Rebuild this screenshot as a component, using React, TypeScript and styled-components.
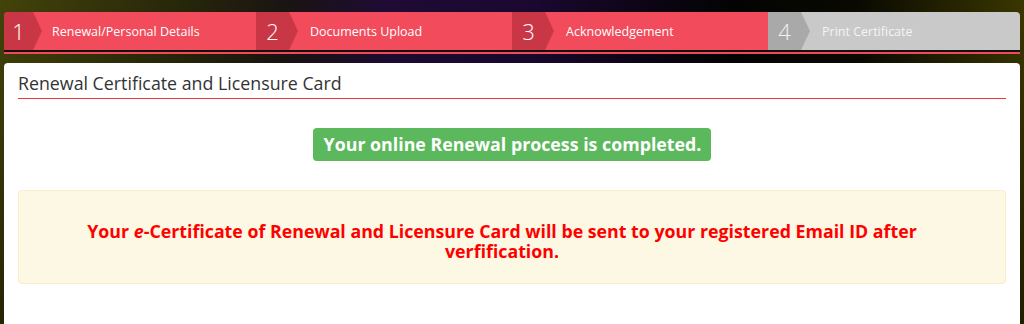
import React from "react";
import styled, { createGlobalStyle } from "styled-components";

const Global = createGlobalStyle`
  html, body { margin: 0; padding: 0; }
  body {
    width: 1024px;
    height: 324px;
    overflow: hidden;
    font-family: "Open Sans", "Liberation Sans", sans-serif;
    background:
      linear-gradient(to bottom, rgba(0,0,0,0) 0%, rgba(0,0,0,0.45) 100%),
      linear-gradient(to right, #43430a 0%, #26260a 18%, #1a1412 28%, #1f0b36 38%, #1a0830 52%, #0c0414 64%, #030303 72%, #0a0a02 84%, #3a3700 100%);
  }
`;

const Page = styled.div`
  padding: 12px 4px 0;
  display: flex;
  flex-direction: column;
`;

const Wizard = styled.div`
  display: grid;
  grid-template-columns: 252px 256px 256px 252px;
  height: 38px;
  border-radius: 4px 4px 0 0;
  overflow: hidden;
`;

const Rule = styled.div`
  height: 2px;
  background: #141010;
`;

const RedRule = styled.div`
  height: 2px;
  background: #f04a58;
  margin-bottom: 9px;
`;

const Step = styled.div<{ $done: boolean }>`
  display: flex;
  align-items: center;
  background: ${(p) => (p.$done ? "#f24b5b" : "#c9c9c9")};
  color: ${(p) => (p.$done ? "#ffffff" : "#f4f4f4")};
`;

const Num = styled.div<{ $done: boolean; $w: number }>`
  position: relative;
  width: ${(p) => p.$w}px;
  height: 100%;
  flex: none;
  display: flex;
  align-items: center;
  justify-content: center;
  background: ${(p) => (p.$done ? "#c93746" : "#a9a9a9")};
  font-size: 22px;
  font-weight: 300;
  line-height: 1;
  &::after {
    content: "";
    position: absolute;
    top: 0;
    left: 100%;
    border-top: 19px solid transparent;
    border-bottom: 19px solid transparent;
    border-left: 9px solid ${(p) => (p.$done ? "#c93746" : "#a9a9a9")};
  }
`;

const StepLabel = styled.div<{ $pad: number }>`
  padding-left: ${(p) => p.$pad}px;
  font-size: 12.5px;
  white-space: nowrap;
`;

const Card = styled.div`
  box-sizing: border-box;
  background: #ffffff;
  border-radius: 4px 4px 0 0;
  padding: 8px 14px 0;
  height: 261px;
  display: flex;
  flex-direction: column;
`;

const Title = styled.div`
  font-size: 17.8px;
  line-height: 24px;
  color: #333333;
  padding-bottom: 3px;
  border-bottom: 1px solid #e8363b;
`;

const Center = styled.div`
  display: flex;
  justify-content: center;
  padding: 29px 0;
`;

const Success = styled.span`
  background: #5cb85c;
  color: #ffffff;
  font-weight: 700;
  font-size: 17.8px;
  line-height: 23px;
  padding: 5px 10px 5px 11px;
  border-radius: 4px;
`;

const Alert = styled.div`
  background: #fcf8e3;
  border: 1px solid #faebcc;
  border-radius: 4px;
  padding: 30px 35px 22px 15px;
  text-align: center;
  color: #ff0000;
  font-weight: 700;
  font-size: 17.8px;
  line-height: 20px;
`;

const steps = [
  { n: 1, label: "Renewal/Personal Details", done: true, w: 29, pad: 19 },
  { n: 2, label: "Documents Upload", done: true, w: 33, pad: 21 },
  { n: 3, label: "Acknowledgement", done: true, w: 33, pad: 21 },
  { n: 4, label: "Print Certificate", done: false, w: 33, pad: 21 },
];

export default function App() {
  return (
    <>
      <Global />
      <Page>
        <Wizard>
          {steps.map((s) => (
            <Step key={s.n} $done={s.done}>
              <Num $done={s.done} $w={s.w}>{s.n}</Num>
              <StepLabel $pad={s.pad}>{s.label}</StepLabel>
            </Step>
          ))}
        </Wizard>
        <Rule />
        <RedRule />
        <Card>
          <Title>Renewal Certificate and Licensure Card</Title>
          <Center>
            <Success>Your online Renewal process is completed.</Success>
          </Center>
          <Alert>
            Your <i>e</i>-Certificate of Renewal and Licensure Card will be sent to your registered Email ID after verfification.
          </Alert>
        </Card>
      </Page>
    </>
  );
}
